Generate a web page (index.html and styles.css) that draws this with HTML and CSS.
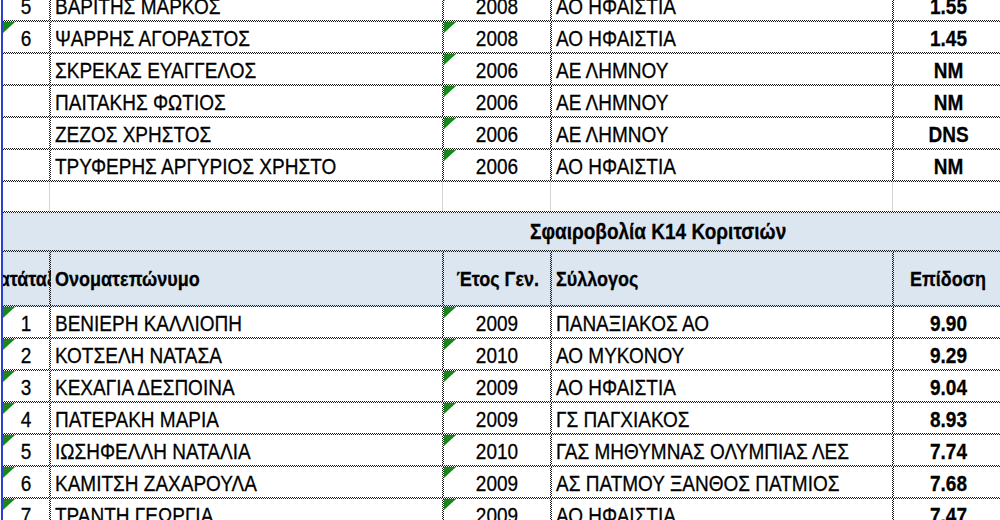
FILE: index.html
```html
<!DOCTYPE html>
<html lang="el">
<head>
<meta charset="utf-8">
<link rel="stylesheet" href="styles.css">
</head>
<body>
<div class="sheet">
  <div class="row data first">
    <div class="c rank"><span>5</span></div><div class="c name"><span>ΒΑΡΙΤΗΣ ΜΑΡΚΟΣ</span></div><div class="c year mark"><span>2008</span></div><div class="c club"><span>ΑΟ ΗΦΑΙΣΤΙΑ</span></div><div class="c perf"><span>1.55</span></div>
  </div>
  <div class="row data">
    <div class="c rank mark"><span>6</span></div><div class="c name"><span>ΨΑΡΡΗΣ ΑΓΟΡΑΣΤΟΣ</span></div><div class="c year mark"><span>2008</span></div><div class="c club"><span>ΑΟ ΗΦΑΙΣΤΙΑ</span></div><div class="c perf"><span>1.45</span></div>
  </div>
  <div class="row data">
    <div class="c rank"></div><div class="c name"><span>ΣΚΡΕΚΑΣ ΕΥΑΓΓΕΛΟΣ</span></div><div class="c year mark"><span>2006</span></div><div class="c club"><span>ΑΕ ΛΗΜΝΟΥ</span></div><div class="c perf"><span>NM</span></div>
  </div>
  <div class="row data">
    <div class="c rank"></div><div class="c name"><span>ΠΑΙΤΑΚΗΣ ΦΩΤΙΟΣ</span></div><div class="c year mark"><span>2006</span></div><div class="c club"><span>ΑΕ ΛΗΜΝΟΥ</span></div><div class="c perf"><span>NM</span></div>
  </div>
  <div class="row data">
    <div class="c rank"></div><div class="c name"><span>ΖΕΖΟΣ ΧΡΗΣΤΟΣ</span></div><div class="c year mark"><span>2006</span></div><div class="c club"><span>ΑΕ ΛΗΜΝΟΥ</span></div><div class="c perf"><span>DNS</span></div>
  </div>
  <div class="row data">
    <div class="c rank"></div><div class="c name"><span>ΤΡΥΦΕΡΗΣ ΑΡΓΥΡΙΟΣ ΧΡΗΣΤΟ</span></div><div class="c year mark"><span>2006</span></div><div class="c club"><span>ΑΟ ΗΦΑΙΣΤΙΑ</span></div><div class="c perf"><span>NM</span></div>
  </div>
  <div class="row empty">
    <div class="g"></div><div class="g"></div><div class="g"></div><div class="g"></div><div class="g last"></div>
  </div>
  <div class="row title">
    <div class="title-text"><span>Σφαιροβολία Κ14 Κοριτσιών</span></div>
  </div>
  <div class="row head">
    <div class="c rank"><span>Κατάταξη</span></div><div class="c name"><span>Ονοματεπώνυμο</span></div><div class="c year"><span>Έτος Γεν.</span></div><div class="c club"><span>Σύλλογος</span></div><div class="c perf"><span>Επίδοση</span></div>
  </div>
  <div class="row data">
    <div class="c rank mark"><span>1</span></div><div class="c name"><span>ΒΕΝΙΕΡΗ ΚΑΛΛΙΟΠΗ</span></div><div class="c year mark"><span>2009</span></div><div class="c club"><span>ΠΑΝΑΞΙΑΚΟΣ ΑΟ</span></div><div class="c perf"><span>9.90</span></div>
  </div>
  <div class="row data">
    <div class="c rank mark"><span>2</span></div><div class="c name"><span>ΚΟΤΣΕΛΗ ΝΑΤΑΣΑ</span></div><div class="c year mark"><span>2010</span></div><div class="c club"><span>ΑΟ ΜΥΚΟΝΟΥ</span></div><div class="c perf"><span>9.29</span></div>
  </div>
  <div class="row data">
    <div class="c rank mark"><span>3</span></div><div class="c name"><span>ΚΕΧΑΓΙΑ ΔΕΣΠΟΙΝΑ</span></div><div class="c year mark"><span>2009</span></div><div class="c club"><span>ΑΟ ΗΦΑΙΣΤΙΑ</span></div><div class="c perf"><span>9.04</span></div>
  </div>
  <div class="row data">
    <div class="c rank mark"><span>4</span></div><div class="c name"><span>ΠΑΤΕΡΑΚΗ ΜΑΡΙΑ</span></div><div class="c year mark"><span>2009</span></div><div class="c club"><span>ΓΣ ΠΑΓΧΙΑΚΟΣ</span></div><div class="c perf"><span>8.93</span></div>
  </div>
  <div class="row data">
    <div class="c rank mark"><span>5</span></div><div class="c name"><span>ΙΩΣΗΦΕΛΛΗ ΝΑΤΑΛΙΑ</span></div><div class="c year mark"><span>2010</span></div><div class="c club"><span>ΓΑΣ ΜΗΘΥΜΝΑΣ ΟΛΥΜΠΙΑΣ ΛΕΣ</span></div><div class="c perf"><span>7.74</span></div>
  </div>
  <div class="row data">
    <div class="c rank mark"><span>6</span></div><div class="c name"><span>ΚΑΜΙΤΣΗ ΖΑΧΑΡΟΥΛΑ</span></div><div class="c year mark"><span>2009</span></div><div class="c club"><span>ΑΣ ΠΑΤΜΟΥ ΞΑΝΘΟΣ ΠΑΤΜΙΟΣ</span></div><div class="c perf"><span>7.68</span></div>
  </div>
  <div class="row data">
    <div class="c rank mark"><span>7</span></div><div class="c name"><span>ΤΡΑΝΤΗ ΓΕΩΡΓΙΑ</span></div><div class="c year mark"><span>2009</span></div><div class="c club"><span>ΑΟ ΗΦΑΙΣΤΙΑ</span></div><div class="c perf"><span>7.47</span></div>
  </div>
</div>
</body>
</html>
```

FILE: styles.css
```css
html, body {
  margin: 0;
  padding: 0;
  background: #ffffff;
}
body {
  width: 1000px;
  height: 520px;
  overflow: hidden;
  font-family: "Liberation Sans", Arial, sans-serif;
  color: #000;
}
.sheet {
  margin-left: 1px;
  border-left: 2px solid #2a3fd2;
  width: 1010px;
}
.row {
  position: relative;
  display: grid;
  grid-template-columns: 48px 393px 108px 342px 112px;
  box-sizing: border-box;
  height: 32px;
  padding-bottom: 2px;
}
.row::after {
  content: "";
  position: absolute;
  left: 0;
  right: 0;
  bottom: 0;
  height: 2px;
  background: repeating-conic-gradient(#1a1a1a 0 25%, transparent 0 50%) 0 0 / 2px 2px;
}
.row.first {
  margin-top: -10px;
}
.c {
  position: relative;
  box-sizing: border-box;
  display: flex;
  align-items: center;
  font-size: 19px;
  white-space: nowrap;
  overflow: hidden;
  padding-top: 3px;
  padding-right: 2px;
}
.c::after {
  content: "";
  position: absolute;
  top: 0;
  bottom: 0;
  right: 0;
  width: 2px;
  background: repeating-conic-gradient(#1a1a1a 0 25%, transparent 0 50%) 0 0 / 2px 2px;
}
.c > span,
.title-text > span {
  display: inline-block;
  transform: scaleY(1.13);
  -webkit-text-stroke: 0.25px #000;
}
.c.perf {
  justify-content: center;
  font-weight: bold;
  padding-right: 3px;
}
.c.perf::after {
  display: none;
}
.rank, .year {
  justify-content: center;
}
.name {
  padding-left: 4px;
}
.club {
  padding-left: 4px;
}
.mark::before {
  content: "";
  position: absolute;
  z-index: 2;
  left: 0;
  top: 0;
  width: 12px;
  height: 11px;
  background: #1b861b;
  clip-path: polygon(0 0, 100% 0, 0 100%);
}
.row.empty {
  height: 31px;
}
.g {
  border-right: 1px solid #d4d4d4;
  margin-right: 1px;
}
.g.last {
  border-right: none;
}
.row.title {
  display: flex;
  height: 39px;
  background: #dce6f1;
  align-items: center;
}
.title-text {
  padding-left: 527px;
  font-size: 19px;
  font-weight: bold;
}
.row.head {
  height: 55px;
  background: #dce6f1;
}
.row.head .c {
  font-weight: bold;
  font-size: 18px;
  padding-top: 1px;
}
.row.head .year {
  justify-content: flex-end;
  padding-right: 13px;
}
.row.head .perf {
  padding-right: 4px;
}
```
